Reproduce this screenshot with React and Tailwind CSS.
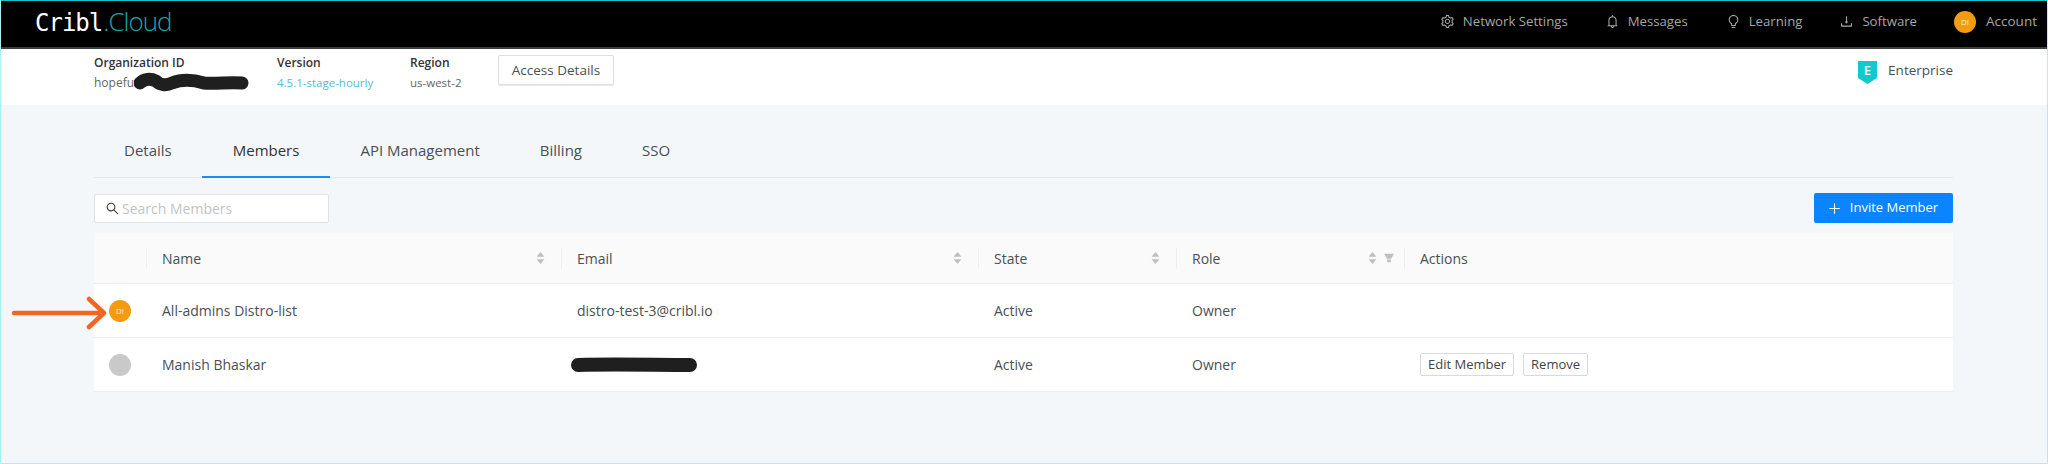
import React from "react";
import { AiOutlineSetting, AiOutlineBell, AiOutlineBulb, AiOutlineDownload, AiOutlineSearch, AiOutlinePlus, AiFillCaretUp, AiFillCaretDown, AiFillFilter } from "react-icons/ai";

const FONT = "font-['Open_Sans','Noto_Sans',sans-serif]";

function Sorter() {
  return (
    <span className="flex flex-col items-center text-[#bfbfbf] text-[11px] leading-none">
      <AiFillCaretUp className="-mb-[4px]" />
      <AiFillCaretDown />
    </span>
  );
}

function Head({ label, className, filter }) {
  return (
    <div className={`flex items-center h-[21px] border-l border-[#efefef] pl-[15px] ${className || ""}`}>
      <span className="flex-1">{label}</span>
      {filter ? (
        <span className="flex items-center gap-[5px] pr-[9px]">
          <Sorter />
          <AiFillFilter className="text-[#bfbfbf] text-[12px]" />
        </span>
      ) : label !== "Actions" ? (
        <span className="pr-[15px]"><Sorter /></span>
      ) : null}
    </div>
  );
}

function Nav({ icon, label, className }) {
  return (
    <div className={`flex items-center ${className}`}>
      <span className="w-[23px] text-[15px] text-[#a8a8a8]">{icon}</span>
      <span>{label}</span>
    </div>
  );
}

function Avatar({ bg, text }) {
  return (
    <div className={`w-[22px] h-[22px] rounded-full flex items-center justify-center text-white/80 text-[8px] ${bg}`}>
      {text}
    </div>
  );
}

function Row({ avatar, name, email, actions }) {
  return (
    <div className="grid grid-cols-[68px_415px_417px_198px_228px_1fr] h-[54px] items-center bg-white border-b border-[#efefef]">
      <div className="pl-[15px]">{avatar}</div>
      <div>{name}</div>
      <div>{email}</div>
      <div>Active</div>
      <div>Owner</div>
      <div className="flex gap-[9px]">{actions}</div>
    </div>
  );
}

function Btn({ children }) {
  return (
    <button className="h-[23px] px-[7px] border border-[#d9d9d9] rounded-[2px] bg-white text-[13px] text-[#444]">
      {children}
    </button>
  );
}

export default function App() {
  return (
    <div className={`${FONT} relative h-[464px] w-[2048px] overflow-hidden bg-[#f3f7fa] text-[14px] text-[#4a4f55] border-x border-b border-[#a4f2f2] flex flex-col`}>
      {/* top bar */}
      <header className="h-[49px] -mx-px bg-black border-t border-[#16c4c8] border-b-2 border-b-[#3c3c3c] flex items-center pb-[5px] shrink-0">
        <div className="pl-[35px] flex items-baseline leading-none -mt-[1px]">
          <span className="font-['DejaVu_Sans_Mono',monospace] text-[24px] tracking-[-1px] text-white">Cribl</span>
          <span className="ml-[1px] text-[26px] font-light tracking-[-1px] text-[#17a8ac]">.Cloud</span>
        </div>
        <div className="ml-auto flex items-center text-[#a6a6a6] text-[13.2px]">
          <Nav icon={<AiOutlineSetting />} label="Network Settings" className="mr-[37px]" />
          <Nav icon={<AiOutlineBell />} label="Messages" className="mr-[38px]" />
          <Nav icon={<AiOutlineBulb />} label="Learning" className="mr-[37px]" />
          <Nav icon={<AiOutlineDownload />} label="Software" className="mr-[37px]" />
          <div className="flex items-center gap-[10px] pr-[11px]">
            <Avatar bg="bg-[#f39c12]" text="DI" />
            <span className="text-[13.5px]">Account</span>
          </div>
        </div>
      </header>

      {/* org bar */}
      <section className="h-[56px] bg-white pl-[93px] pr-[94px] pt-[4px] flex items-start shrink-0 text-[12px]">
        <div className="w-[183px] relative">
          <div className="font-semibold text-[#333] leading-[20px]">Organization ID</div>
          <div className="leading-[20px] text-[#666]">hopefu</div>
          <svg className="absolute left-[40px] top-[19px]" width="115" height="22" viewBox="0 0 115 22">
            <path d="M6 11 C 10 7, 16 6, 22 9 C 26 13, 32 14, 38 11 C 48 7, 60 8, 70 11 C 82 12, 95 10, 108 11" fill="none" stroke="#1f1f1f" strokeWidth="13" strokeLinecap="round" />
          </svg>
        </div>
        <div className="w-[133px]">
          <div className="font-semibold text-[#333] leading-[20px]">Version</div>
          <div className="leading-[20px] text-[11.5px] text-[#52bcd8]">4.5.1-stage-hourly</div>
        </div>
        <div className="w-[88px]">
          <div className="font-semibold text-[#333] leading-[20px]">Region</div>
          <div className="leading-[20px] text-[11.5px] text-[#666]">us-west-2</div>
        </div>
        <button className="mt-[2px] w-[116px] h-[30px] border border-[#dedede] rounded-[2px] text-[13.5px] text-[#4a4f55] bg-white shadow-[0_1px_0_#e8e8e8]">Access Details</button>
        <div className="ml-auto mt-[8px] flex items-start gap-[11px] text-[#4a4f55] text-[13.5px]">
          <svg width="19" height="24" viewBox="0 0 19 24">
            <path d="M0 0H19V17L9.5 23L0 17Z" fill="#12c9cf" />
            <text x="9.5" y="14" textAnchor="middle" fontSize="13" fontWeight="600" fill="#fff">E</text>
          </svg>
          <span className="leading-[18px]">Enterprise</span>
        </div>
      </section>

      {/* content */}
      <main className="pl-[93px] pr-[94px] flex-1">
        <nav className="h-[73px] pt-[19px] border-b border-[#e6e9ec] flex text-[15px] text-[#4a4f55]">
          {["Details", "Members", "API Management", "Billing", "SSO"].map((t) => (
            <div key={t} className={t === "Members" ? "px-[31px] flex items-center border-b-2 border-[#1a8cff] text-[#333] -mb-px" : "px-[30px] flex items-center"}>
              {t}
            </div>
          ))}
        </nav>

        <div className="flex justify-between items-center mt-[15px] h-[30px]">
          <div className="w-[235px] h-[29px] bg-white border border-[#dfe3e6] rounded-[2px] flex items-center pl-[10px] gap-[2px] text-[#c4c4c4]">
            <AiOutlineSearch className="text-[#444] text-[15px]" />
            <span>Search Members</span>
          </div>
          <button className="w-[139px] h-[30px] pr-[2px] bg-[#0a84ff] rounded-[2px] text-white text-[13px] flex items-center justify-center gap-[8px]">
            <AiOutlinePlus className="text-[15px]" />
            Invite Member
          </button>
        </div>

        <div className="mt-[10px]">
          <div className="grid grid-cols-[52px_415px_417px_198px_228px_1fr] h-[51px] items-center bg-[#fafafa] border-b border-[#efefef]">
            <div />
            <Head label="Name" />
            <Head label="Email" />
            <Head label="State" />
            <Head label="Role" filter />
            <Head label="Actions" />
          </div>
          <Row
            avatar={<Avatar bg="bg-[#f39c12]" text="DI" />}
            name="All-admins Distro-list"
            email="distro-test-3@cribl.io"
          />
          <Row
            avatar={<Avatar bg="bg-[#c9c9c9]" text="" />}
            name="Manish Bhaskar"
            email={
              <svg className="-ml-[6px]" width="126" height="16" viewBox="0 0 126 16">
                <path d="M7 8 C 40 7, 85 8, 119 8" fill="none" stroke="#1f1f1f" strokeWidth="14" strokeLinecap="round" />
              </svg>
            }
            actions={
              <>
                <Btn>Edit Member</Btn>
                <Btn>Remove</Btn>
              </>
            }
          />
        </div>
      </main>

      {/* annotation arrow laid over the first row */}
      <svg className="absolute left-[10px] top-[295px]" width="96" height="38" viewBox="0 0 96 38">
        <path d="M3 18H92M78 4L93 18L78 32" fill="none" stroke="#f26522" strokeWidth="4.5" strokeLinecap="round" strokeLinejoin="round" />
      </svg>
    </div>
  );
}
